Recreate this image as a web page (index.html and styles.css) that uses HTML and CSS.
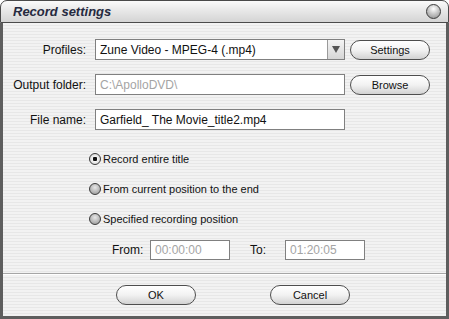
FILE: index.html
```html
<!DOCTYPE html>
<html lang="en">
<head>
  <meta charset="UTF-8">
  <title>Record settings</title>
  <link rel="stylesheet" href="styles.css">
</head>
<body>
  <div class="window">
    <div class="titlebar">
      <span class="title">Record settings</span>
      <span class="close"></span>
    </div>

    <div class="content">
      <div class="form">
        <label>Profiles:</label>
        <div class="select">
          <span class="select-text">Zune Video - MPEG-4 (.mp4)</span>
          <span class="arrow"></span>
        </div>
        <button class="pill">Settings</button>

        <label>Output folder:</label>
        <div class="field disabled">C:\ApolloDVD\</div>
        <button class="pill">Browse</button>

        <label>File name:</label>
        <div class="field">Garfield_ The Movie_title2.mp4</div>
      </div>

      <div class="options">
        <div class="option"><span class="radio checked"></span>Record entire title</div>
        <div class="option"><span class="radio"></span>From current position to the end</div>
        <div class="option"><span class="radio"></span>Specified recording position</div>
      </div>

      <div class="range">
        <span class="range-label">From:</span>
        <div class="field small disabled">00:00:00</div>
        <span class="range-label to">To:</span>
        <div class="field small disabled">01:20:05</div>
      </div>

      <div class="separator"></div>

      <div class="actions">
        <button class="pill">OK</button>
        <button class="pill">Cancel</button>
      </div>
    </div>
  </div>
</body>
</html>
```

FILE: styles.css
```css
* {
  margin: 0;
  padding: 0;
  box-sizing: border-box;
}

body {
  background-color: #fff;
  font-family: "Liberation Sans", Arial, sans-serif;
  font-size: 12px;
  color: #111;
}

.window {
  width: 449px;
  height: 319px;
  display: flex;
  flex-direction: column;
}

.titlebar {
  height: 23px;
  display: flex;
  align-items: center;
  justify-content: space-between;
  padding: 0 7px 0 12px;
  border: 1px solid #4a4a4a;
  border-radius: 7px 7px 0 0;
  background: linear-gradient(to bottom, #fbfbfb 0%, #e8e8e8 45%, #d4d4d4 100%);
}

.title {
  font-size: 13px;
  font-weight: bold;
  font-style: italic;
  color: #262a40;
}

.close {
  width: 15px;
  height: 15px;
  border-radius: 50%;
  border: 1px solid #3a3a3a;
  background: radial-gradient(circle at 50% 30%, #ffffff 0%, #c8c8c8 45%, #8a8a8a 100%);
}

.content {
  flex: 1;
  display: flex;
  flex-direction: column;
  border: 3px solid #5e5e5e;
  border-top: none;
  background: repeating-linear-gradient(to bottom, #f2f2f2 0, #f2f2f2 2px, #e7e7e7 2px, #e7e7e7 3px);
  padding-top: 16px;
}

.form {
  display: grid;
  grid-template-columns: 83px 250px 80px;
  column-gap: 9px;
  row-gap: 14px;
  align-items: center;
}

.form label {
  text-align: right;
}

.form .pill {
  margin-left: -4px;
}

.select, .field {
  height: 21px;
  background-color: #fff;
  border: 1px solid #808080;
  display: flex;
  align-items: center;
  padding-left: 4px;
}

.select {
  justify-content: space-between;
  padding-right: 0;
}

.arrow {
  width: 17px;
  height: 19px;
  border-left: 1px solid #9a9a9a;
  background: linear-gradient(to bottom, #f4f4f4, #d6d6d6);
  position: relative;
}

.arrow::after {
  content: "";
  position: absolute;
  left: 4px;
  top: 6px;
  border-left: 4px solid transparent;
  border-right: 4px solid transparent;
  border-top: 7px solid #555;
}

.disabled {
  color: #a4a4a4;
}

.pill {
  width: 80px;
  height: 20px;
  font-family: "Liberation Sans", Arial, sans-serif;
  font-size: 11px;
  color: #111;
  border: 1px solid #4e4e4e;
  border-radius: 10px;
  background: linear-gradient(to bottom, #ffffff 0%, #f2f2f2 50%, #d2d2d2 100%);
}

.options {
  display: flex;
  flex-direction: column;
  gap: 14px;
  margin-top: 21px;
  padding-left: 86px;
  font-size: 11px;
}

.option {
  height: 16px;
  display: flex;
  align-items: center;
  gap: 2px;
}

.radio {
  width: 12px;
  height: 12px;
  border-radius: 50%;
  border: 1px solid #3c3c3c;
  background: radial-gradient(circle at 50% 35%, #e8e8e8 0%, #b4b4b4 60%, #8c8c8c 100%);
}

.radio.checked {
  background: radial-gradient(circle, #111 0, #111 2px, #f4f4f4 2.5px, #c8c8c8 100%);
}

.range {
  display: flex;
  align-items: center;
  margin-top: 13px;
  padding-left: 109px;
}

.range-label {
  width: 38px;
}

.range-label.to {
  width: 35px;
  margin-left: 20px;
}

.field.small {
  width: 80px;
  height: 20px;
}

.separator {
  margin-top: 13px;
  height: 2px;
  border-top: 1px solid #a6a6a6;
  border-bottom: 1px solid #fff;
}

.actions {
  display: flex;
  gap: 74px;
  margin-top: 10px;
  padding-left: 113px;
}
```
